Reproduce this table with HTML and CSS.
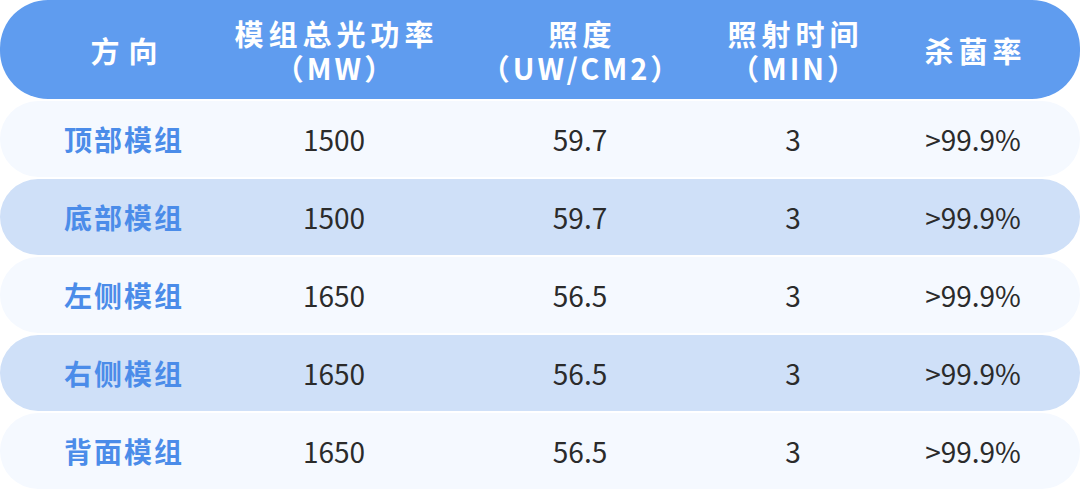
FILE: index.html
```html
<!DOCTYPE html>
<html lang="zh-CN">
<head>
<meta charset="utf-8">
<title>模组参数</title>
<link rel="stylesheet" href="styles.css">
</head>
<body>
<div class="table">
  <div class="row head">
    <div class="cell"><div class="title"><span class="line wide">方向</span></div></div>
    <div class="cell"><div class="title"><span class="line">模组总光功率</span><span class="line unit">（MW）</span></div></div>
    <div class="cell"><div class="title"><span class="line">照度</span><span class="line unit">（UW/CM2）</span></div></div>
    <div class="cell"><div class="title"><span class="line">照射时间</span><span class="line unit">（MIN）</span></div></div>
    <div class="cell last"><div class="title"><span class="line">杀菌率</span></div></div>
  </div>
  <div class="row light">
    <div class="cell label">顶部模组</div>
    <div class="cell">1500</div>
    <div class="cell">59.7</div>
    <div class="cell">3</div>
    <div class="cell last">&gt;99.9%</div>
  </div>
  <div class="row dark">
    <div class="cell label">底部模组</div>
    <div class="cell">1500</div>
    <div class="cell">59.7</div>
    <div class="cell">3</div>
    <div class="cell last">&gt;99.9%</div>
  </div>
  <div class="row light">
    <div class="cell label">左侧模组</div>
    <div class="cell">1650</div>
    <div class="cell">56.5</div>
    <div class="cell">3</div>
    <div class="cell last">&gt;99.9%</div>
  </div>
  <div class="row dark">
    <div class="cell label">右侧模组</div>
    <div class="cell">1650</div>
    <div class="cell">56.5</div>
    <div class="cell">3</div>
    <div class="cell last">&gt;99.9%</div>
  </div>
  <div class="row light">
    <div class="cell label">背面模组</div>
    <div class="cell">1650</div>
    <div class="cell">56.5</div>
    <div class="cell">3</div>
    <div class="cell last">&gt;99.9%</div>
  </div>
</div>
</body>
</html>
```
FILE: styles.css
```css
html, body {
  margin: 0;
  padding: 0;
  background: #ffffff;
}

body {
  font-family: "Noto Sans CJK SC", "Noto Sans", sans-serif;
  width: 1080px;
  height: 489px;
  overflow: hidden;
}

.table {
  display: flex;
  flex-direction: column;
  gap: 2px;
}

.row {
  display: grid;
  grid-template-columns: 248px 172px 320px 106px 1fr;
  height: 76px;
  border-radius: 38px;
  font-size: 28px;
  color: #2b2b2b;
}

.row.head {
  height: 99px;
  border-radius: 48px;
  background: #5f9cef;
  color: #ffffff;
  font-size: 29px;
  font-weight: 700;
}

.row.light {
  background: #f5f9ff;
}

.row.dark {
  background: #cfe0f8;
}

.cell {
  display: flex;
  align-items: center;
  justify-content: center;
  text-align: center;
  white-space: nowrap;
}

.title {
  display: flex;
  flex-direction: column;
  align-items: center;
}

.line {
  display: block;
  height: 34px;
  line-height: 34px;
  letter-spacing: 5px;
  margin-right: -5px;
}

.line.wide {
  letter-spacing: 9px;
  margin-right: -9px;
}

.line.unit {
  letter-spacing: 3px;
  margin-right: -3px;
}

.cell.last {
  padding-left: 20px;
}

.cell.label {
  color: #4b8ce9;
  font-weight: 700;
  letter-spacing: 2px;
}
```
